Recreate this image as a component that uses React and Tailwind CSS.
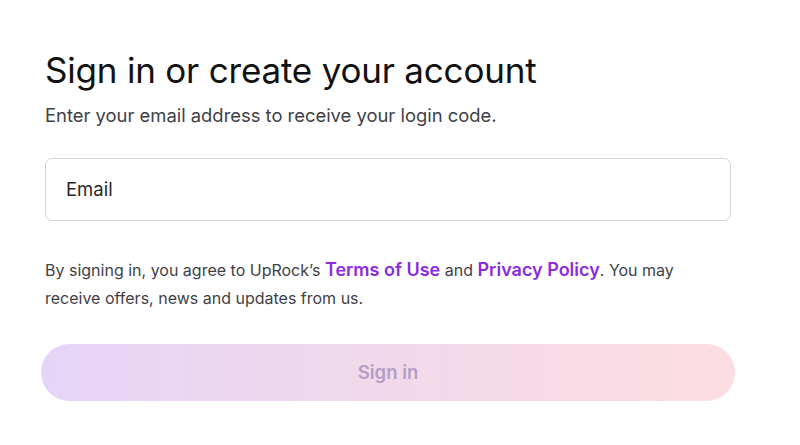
export default function App() {
  return (
    <div
      className="min-h-screen bg-white"
      style={{ fontFamily: 'Inter, "Open Sans", sans-serif' }}
    >
      <div className="pl-[45px] pr-[69px] pt-[48px]">
        <h1 className="text-[35px] leading-[44px] text-[#111] font-normal tracking-[-0.2px]">
          Sign in or create your account
        </h1>
        <p className="mt-[10px] text-[18.4px] leading-[26px] text-[#3f3f46]">
          Enter your email address to receive your login code.
        </p>
        <div className="mt-[30px] h-[63px] rounded-[7px] border border-[#d4d4d8] flex items-center px-[20px]">
          <span className="text-[18.5px] text-[#27272a]">Email</span>
        </div>
        <p className="mt-[35px] max-w-[665px] text-[16px] leading-[28px] text-[#3f3f46]">
          By signing in, you agree to UpRock’s{' '}
          <a className="text-[18px] font-semibold text-[#8b2be2]">Terms of Use</a> and{' '}
          <a className="text-[18px] font-semibold text-[#8b2be2]">Privacy Policy</a>. You may
          receive offers, news and updates from us.
        </p>
        <div className="mt-[32px] -mx-[4px]">
          <button className="w-full h-[57px] rounded-full bg-gradient-to-r from-[#e6d4f8] via-[#f2d9ea] to-[#fcdde2] text-[18.5px] font-semibold text-[#b39ec4]">
            Sign in
          </button>
        </div>
      </div>
    </div>
  );
}
